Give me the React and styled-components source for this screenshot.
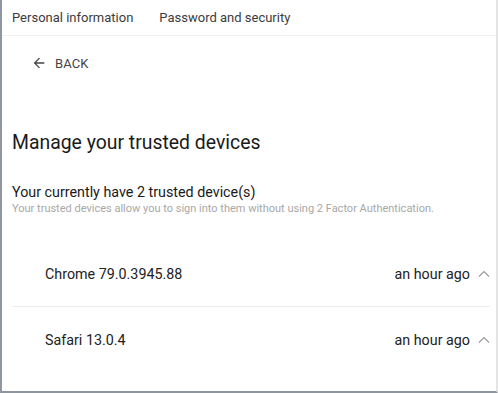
import React from 'react'
import styled, { createGlobalStyle } from 'styled-components'

const GlobalStyle = createGlobalStyle`
	html, body {
		margin: 0;
		padding: 0;
		background: #ffffff;
	}
	body {
		font-family: Roboto, 'Liberation Sans', sans-serif;
		color: #212121;
	}
`

const Frame = styled.div`
	box-sizing: border-box;
	width: 498px;
	height: 393px;
	border-left: 2px solid #9097a0;
	border-bottom: 2px solid #8f959c;
	border-right: 2px solid #e4e4e4;
	overflow: hidden;
	display: flex;
	flex-direction: column;
`

const Tabs = styled.div`
	display: flex;
	gap: 26px;
	height: 35px;
	align-items: center;
	padding-left: 10px;
	border-bottom: 1px solid #f0f0f0;
`

const Tab = styled.div`
	font-size: 13px;
	color: #3c3c3c;
	margin-top: -1px;
`

const BackButton = styled.button`
	display: flex;
	align-items: center;
	gap: 8px;
	margin: 17px 0 0 29px;
	padding: 0;
	border: none;
	background: none;
	font-family: inherit;
	font-size: 13px;
	color: #444;
	letter-spacing: 0.1px;
	align-self: flex-start;
	height: 20px;
`

const Title = styled.h1`
	margin: 58px 0 0 10px;
	font-size: 19.4px;
	font-weight: 400;
	color: #1a1a1a;
	line-height: 24px;
`

const Summary = styled.div`
	margin: 27px 0 0 10px;
	font-size: 14.3px;
	color: #1a1a1a;
	line-height: 20px;
`

const Hint = styled.div`
	margin: 0 0 0 10px;
	font-size: 11px;
	color: #a8a8a8;
	line-height: 14px;
`

const List = styled.div`
	margin: 25px 6px 0 10px;
`

const Row = styled.div`
	display: flex;
	align-items: center;
	justify-content: space-between;
	height: 65px;
	padding: 0 0 0 33px;
	border-top: ${p => (p.$first ? 'none' : '1px solid #ececec')};
`

const Name = styled.span`
	font-size: 14.3px;
	color: #222;
`

const Meta = styled.span`
	display: flex;
	align-items: center;
	gap: 8px;
	font-size: 14.3px;
	color: #222;
`

const Chevron = () => (
	<svg width="12" height="8" viewBox="0 0 12 8">
		<path d="M1 6.5 L6 1.5 L11 6.5" fill="none" stroke="#9a9a9a" strokeWidth="1.2" />
	</svg>
)

const ArrowLeft = () => (
	<svg width="16" height="16" viewBox="0 0 24 24">
		<path d="M20 11H7.83l5.59-5.59L12 4l-8 8 8 8 1.41-1.41L7.83 13H20v-2z" fill="#444" />
	</svg>
)

const devices = [
	{ name: 'Chrome 79.0.3945.88', seen: 'an hour ago' },
	{ name: 'Safari 13.0.4', seen: 'an hour ago' }
]

export default function App() {
	return (
		<>
			<GlobalStyle />
			<Frame>
				<Tabs>
					<Tab>Personal information</Tab>
					<Tab>Password and security</Tab>
				</Tabs>
				<BackButton>
					<ArrowLeft />
					BACK
				</BackButton>
				<Title>Manage your trusted devices</Title>
				<Summary>Your currently have 2 trusted device(s)</Summary>
				<Hint>
					Your trusted devices allow you to sign into them without using 2 Factor
					Authentication.
				</Hint>
				<List>
					{devices.map((d, i) => (
						<Row key={d.name} $first={i === 0}>
							<Name>{d.name}</Name>
							<Meta>
								{d.seen}
								<Chevron />
							</Meta>
						</Row>
					))}
				</List>
			</Frame>
		</>
	)
}
